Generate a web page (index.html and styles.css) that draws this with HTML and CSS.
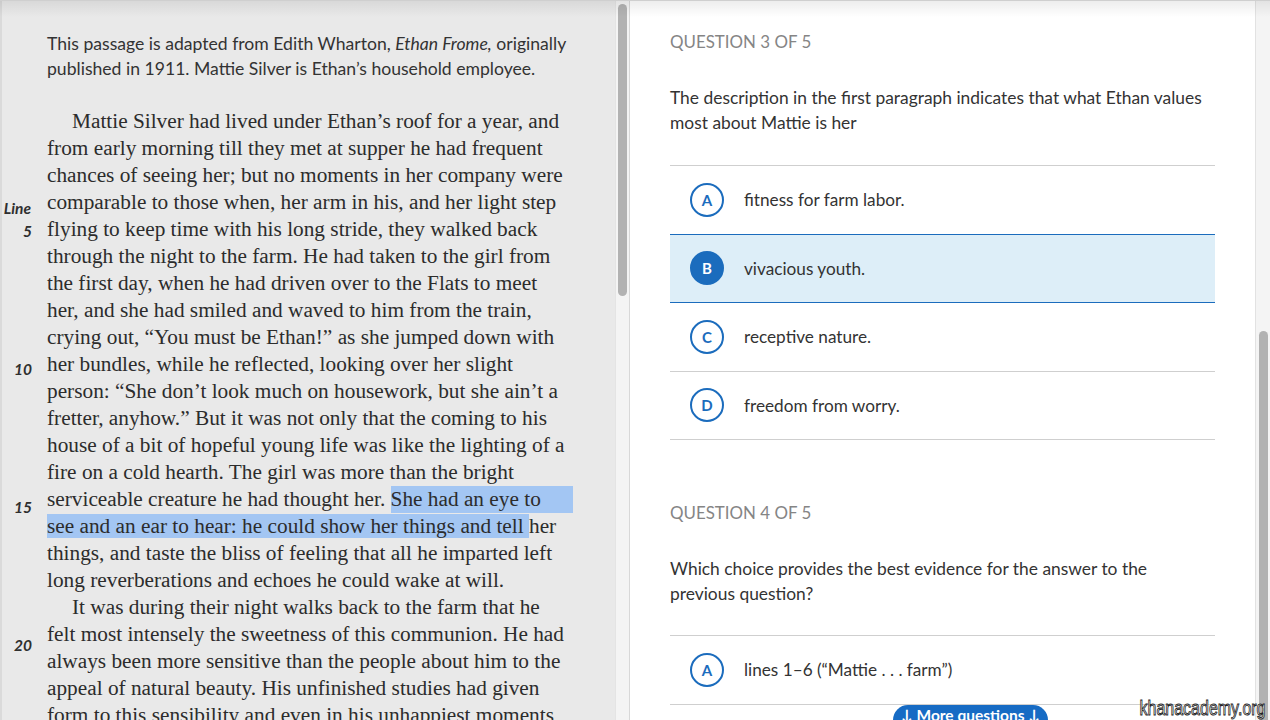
FILE: index.html
```html
<!DOCTYPE html>
<html>
<head>
<meta charset="utf-8">
<link rel="stylesheet" href="styles.css">
</head>
<body>
<div class="app">
  <section class="passage-pane">
    <p class="intro">This passage is adapted from Edith Wharton, <em>Ethan Frome,</em> originally<br>published in 1911. Mattie Silver is Ethan’s household employee.</p>
    <div class="passage">
      <div class="gutter">
        <span class="lbl">Line</span>
        <span class="num n5">5</span>
        <span class="num">10</span>
        <span class="num">15</span>
        <span class="num">20</span>
      </div>
      <div class="text">
        <div class="ln indent">Mattie Silver had lived under Ethan’s roof for a year, and</div>
        <div class="ln">from early morning till they met at supper he had frequent</div>
        <div class="ln">chances of seeing her; but no moments in her company were</div>
        <div class="ln">comparable to those when, her arm in his, and her light step</div>
        <div class="ln">flying to keep time with his long stride, they walked back</div>
        <div class="ln">through the night to the farm. He had taken to the girl from</div>
        <div class="ln">the first day, when he had driven over to the Flats to meet</div>
        <div class="ln">her, and she had smiled and waved to him from the train,</div>
        <div class="ln">crying out, “You must be Ethan!” as she jumped down with</div>
        <div class="ln">her bundles, while he reflected, looking over her slight</div>
        <div class="ln">person: “She don’t look much on housework, but she ain’t a</div>
        <div class="ln">fretter, anyhow.” But it was not only that the coming to his</div>
        <div class="ln">house of a bit of hopeful young life was like the lighting of a</div>
        <div class="ln">fire on a cold hearth. The girl was more than the bright</div>
        <div class="ln split"><span>serviceable creature he had thought her.&nbsp;</span><span class="hl fill">She had an eye to</span></div>
        <div class="ln"><span class="hl">see and an ear to hear: he could show her things and tell </span>her</div>
        <div class="ln">things, and taste the bliss of feeling that all he imparted left</div>
        <div class="ln">long reverberations and echoes he could wake at will.</div>
        <div class="ln indent">It was during their night walks back to the farm that he</div>
        <div class="ln">felt most intensely the sweetness of this communion. He had</div>
        <div class="ln">always been more sensitive than the people about him to the</div>
        <div class="ln">appeal of natural beauty. His unfinished studies had given</div>
        <div class="ln">form to this sensibility and even in his unhappiest moments</div>
      </div>
    </div>
  </section>
  <div class="scroll left-scroll"><div class="thumb"></div></div>
  <section class="question-pane">
    <div class="question">
      <h2 class="q-label">QUESTION 3 OF 5</h2>
      <p class="q-text">The description in the first paragraph indicates that what Ethan values<br>most about Mattie is her</p>
      <ul class="options">
        <li class="option"><span class="bubble">A</span><span class="opt-text">fitness for farm labor.</span></li>
        <li class="option selected"><span class="bubble">B</span><span class="opt-text">vivacious youth.</span></li>
        <li class="option"><span class="bubble">C</span><span class="opt-text">receptive nature.</span></li>
        <li class="option"><span class="bubble">D</span><span class="opt-text">freedom from worry.</span></li>
      </ul>
    </div>
    <div class="question q4">
      <h2 class="q-label">QUESTION 4 OF 5</h2>
      <p class="q-text">Which choice provides the best evidence for the answer to the<br>previous question?</p>
      <ul class="options">
        <li class="option"><span class="bubble">A</span><span class="opt-text">lines 1–6 (“Mattie . . . farm”)</span></li>
        <li class="option"><span class="bubble">B</span><span class="opt-text">lines 7–12 (“He had . . . slight”)</span></li>
      </ul>
    </div>
    <div class="more">↓ More questions ↓</div>
  </section>
  <div class="scroll right-scroll"><div class="thumb"></div></div>
  <div class="watermark">khanacademy.org</div>
</div>
</body>
</html>
```
FILE: styles.css
```css
* { box-sizing: border-box; }
html, body { margin: 0; padding: 0; }
body {
  width: 1270px;
  height: 720px;
  overflow: hidden;
  background: #fff;
  font-family: "Lato", "Liberation Sans", sans-serif;
}
.app {
  position: relative;
  display: flex;
  height: 720px;
  border-top: 1px solid #cfcfcf;
}
.app::before {
  content: "";
  position: absolute;
  left: 0; right: 0; top: 0;
  height: 16px;
  background: linear-gradient(rgba(0,0,0,0.07), rgba(0,0,0,0));
  pointer-events: none;
  z-index: 3;
}
.passage-pane {
  width: 615px;
  flex: none;
  background: #e9e9e9;
  border-left: 2px solid #dadada;
  overflow: hidden;
  padding-top: 30px;
  color: #2f2f2f;
}
.intro {
  margin: 0 0 27px 45px;
  font-size: 17.6px;
  line-height: 25px;
  color: #333;
}
.intro em { font-style: italic; }
.passage {
  display: flex;
}
.gutter {
  width: 45px;
  flex: none;
  display: flex;
  flex-direction: column;
  align-items: flex-end;
  padding-right: 15px;
  padding-top: 90px;
  font-family: "Lato", "Liberation Sans", sans-serif;
  font-style: italic;
  font-weight: 700;
  font-size: 15.5px;
  line-height: 20px;
  color: #2f2f2f;
}
.gutter .lbl { margin-right: 1px; }
.gutter .num { margin-top: 118px; }
.gutter .num.n5 { margin-top: 3px; }
.text {
  width: 526px;
  flex: none;
  font-family: "Liberation Serif", "Times New Roman", serif;
  font-size: 21.3px;
  line-height: 27px;
  color: #2c2c2c;
}
.ln { white-space: nowrap; }
.ln.indent { padding-left: 25px; }
.ln.split { display: flex; }
.hl { background: #a3c6f3; }
.hl.fill { flex: 1; }
.scroll {
  width: 15px;
  flex: none;
  background: #f4f4f4;
  position: relative;
}
.left-scroll { border-right: 1px solid #d8d8d8; border-left: 1px solid #e4e4e4; }
.left-scroll .thumb {
  position: absolute;
  left: 2px; top: 3px;
  width: 9px; height: 292px;
  border-radius: 5px;
  background: #b2b2b2;
}
.right-scroll { border-left: 1px solid #e2e2e2; }
.right-scroll .thumb {
  position: absolute;
  left: 3px; top: 330px;
  width: 9px; height: 420px;
  border-radius: 5px;
  background: #b2b2b2;
}
.question-pane {
  flex: 1;
  background: #fff;
  padding: 31px 40px 0 40px;
  overflow: hidden;
  position: relative;
}
.question { width: 545px; }
.q-label {
  margin: 0;
  font-size: 16.9px;
  line-height: 20px;
  font-weight: 400;
  color: #858585;
}
.q-text {
  margin: 33px 0 30px;
  font-size: 17.4px;
  line-height: 25px;
  color: #333;
}
.options {
  list-style: none;
  margin: 0;
  padding: 0;
  border-top: 1px solid #cfcfcf;
}
.option {
  display: flex;
  align-items: center;
  height: 68.5px;
  border-bottom: 1px solid #cfcfcf;
  padding-left: 20px;
  font-size: 17.2px;
  color: #333;
}
.option.selected {
  background: #ddeef8;
  border-top: 1px solid #1b6cbd;
  border-bottom: 1px solid #1b6cbd;
  margin-top: -1px;
  height: 69.5px;
}
.bubble {
  width: 34px; height: 34px;
  flex: none;
  border: 2px solid #1b6cbd;
  border-radius: 50%;
  display: flex;
  align-items: center;
  justify-content: center;
  font-size: 15px;
  font-weight: 700;
  color: #1b6cbd;
  margin-right: 20px;
  background: #fff;
}
.selected .bubble { background: #1b6cbd; color: #fff; }
.q4 { margin-top: 63px; }
.q4 .q-text { margin-bottom: 29px; }
.more {
  position: absolute;
  left: 263px;
  top: 704px;
  width: 155px;
  height: 30px;
  border-radius: 15px;
  background: #166bc4;
  color: #fff;
  font-family: "Lato", "Liberation Sans", sans-serif;
  font-size: 15.5px;
  font-weight: 700;
  padding-top: 1px;
  text-align: center;
  line-height: 18px;
  white-space: nowrap;
  z-index: 2;
}
.watermark {
  position: absolute;
  right: 5px;
  bottom: 1px;
  font-family: "Liberation Sans", Arial, sans-serif;
  font-size: 20px;
  line-height: 22px;
  color: #fff;
  -webkit-text-stroke: 0.9px #222;
  transform: scaleX(0.8);
  transform-origin: right bottom;
  z-index: 4;
}
```
